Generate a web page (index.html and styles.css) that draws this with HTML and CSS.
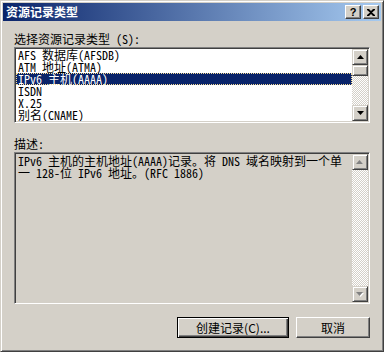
FILE: index.html
```html
<!DOCTYPE html>
<html lang="zh-CN">
<head>
    <meta charset="UTF-8">
    <title>资源记录类型</title>
    <link rel="stylesheet" href="styles.css">
</head>
<body>
    <div class="window">
        <div class="titlebar">
            <span class="title">资源记录类型</span>
            <div class="caption-buttons">
                <span class="cap-btn help">?</span>
                <span class="cap-btn close">
                    <svg width="8" height="7" viewBox="0 0 8 7"><path d="M0 0h2l2 2 2-2h2v1L5 3.5 8 6v1H6L4 5 2 7H0V6l3-2.5L0 1z" fill="#000"/></svg>
                </span>
            </div>
        </div>

        <div class="client">
            <label class="field-label">选择资源记录类型 (S):</label>
            <div class="listbox">
                <ul class="items">
                    <li>AFS 数据库(AFSDB)</li>
                    <li>ATM 地址(ATMA)</li>
                    <li class="selected">IPv6 主机(AAAA)</li>
                    <li>ISDN</li>
                    <li>X.25</li>
                    <li>别名(CNAME)</li>
                </ul>
                <div class="scrollbar">
                    <span class="sb-btn">
                        <svg width="7" height="4" viewBox="0 0 7 4"><path d="M3.5 0L7 4H0z" fill="#000"/></svg>
                    </span>
                    <span class="sb-thumb"></span>
                    <span class="sb-track"></span>
                    <span class="sb-btn">
                        <svg width="7" height="4" viewBox="0 0 7 4"><path d="M0 0h7L3.5 4z" fill="#000"/></svg>
                    </span>
                </div>
            </div>

            <label class="field-label desc-label">描述:</label>
            <div class="descbox">
                <p class="desc-text">IPv6 主机的主机地址(AAAA)记录。将 DNS 域名映射到一个单<br>一 128-位 IPv6 地址。(RFC 1886)</p>
                <div class="scrollbar disabled">
                    <span class="sb-btn">
                        <svg width="8" height="5" viewBox="0 0 8 5"><path d="M4 1L7 4H1z" fill="#fff"/><path d="M3.5 0L7 4H0z" fill="#808080" transform="translate(0 0)"/></svg>
                    </span>
                    <span class="sb-track"></span>
                    <span class="sb-btn">
                        <svg width="8" height="5" viewBox="0 0 8 5"><path d="M1 1h7L4.5 5z" fill="#fff"/><path d="M0 0h7L3.5 4z" fill="#808080"/></svg>
                    </span>
                </div>
            </div>

            <div class="buttons">
                <button class="btn default">创建记录(C)...</button>
                <button class="btn cancel">取消</button>
            </div>
        </div>
    </div>
</body>
</html>
```

FILE: styles.css
```css
body {
    margin: 0;
    background-color: #d4d0c8;
    font-family: "Noto Sans Mono CJK SC", "Liberation Mono", "Noto Sans CJK SC", monospace;
    font-size: 12px;
    color: #000;
}

.window {
    width: 384px;
    height: 352px;
    box-sizing: border-box;
    background-color: #d4d0c8;
    border: 1px solid;
    border-color: #d4d0c8 #404040 #404040 #d4d0c8;
    box-shadow: inset 1px 1px #fff, inset -1px -1px #808080;
    padding: 2px;
    display: flex;
    flex-direction: column;
}

.titlebar {
    height: 18px;
    background: linear-gradient(to right, #0a246a, #a6caf0);
    display: flex;
    align-items: center;
    justify-content: space-between;
    padding: 0 2px 0 3px;
}

.title {
    color: #fff;
    font-family: "Noto Sans CJK SC", sans-serif;
    font-weight: bold;
    font-size: 12px;
    line-height: 14px;
}

.caption-buttons {
    display: flex;
    gap: 2px;
}

.cap-btn {
    width: 16px;
    height: 14px;
    box-sizing: border-box;
    background-color: #d4d0c8;
    border: 1px solid;
    border-color: #fff #404040 #404040 #fff;
    box-shadow: inset -1px -1px #808080;
    display: flex;
    align-items: center;
    justify-content: center;
    font-family: "Liberation Sans", sans-serif;
    font-weight: bold;
    font-size: 11px;
    line-height: 12px;
}

.client {
    flex: 1;
    display: flex;
    flex-direction: column;
    padding: 11px 11px 0 11px;
}

.field-label {
    line-height: 13px;
    margin-bottom: 2px;
    white-space: nowrap;
}

.desc-label {
    margin-top: 14px;
}

.listbox,
.descbox {
    display: flex;
    box-sizing: border-box;
    border: 1px solid;
    border-color: #808080 #fff #fff #808080;
    box-shadow: inset 1px 1px #404040, inset -1px -1px #d4d0c8;
    padding: 1px;
}

.listbox {
    height: 76px;
    background-color: #fff;
}

.descbox {
    height: 152px;
    background-color: #d4d0c8;
}

.items {
    flex: 1;
    list-style: none;
    margin: 0;
    padding: 0;
    overflow: hidden;
}

.items li {
    height: 12px;
    line-height: 12px;
    padding-left: 2px;
    white-space: nowrap;
}

.items li.selected {
    background-color: #0a246a;
    color: #fff;
    outline: 1px dotted #f5db95;
    outline-offset: -1px;
}

.desc-text {
    flex: 1;
    margin: 0;
    padding: 1px 0 0 2px;
    line-height: 12px;
    white-space: nowrap;
    overflow: hidden;
}

.scrollbar {
    width: 16px;
    display: flex;
    flex-direction: column;
}

.sb-btn,
.sb-thumb {
    height: 16px;
    box-sizing: border-box;
    background-color: #d4d0c8;
    border: 1px solid;
    border-color: #d4d0c8 #404040 #404040 #d4d0c8;
    box-shadow: inset 1px 1px #fff, inset -1px -1px #808080;
    display: flex;
    align-items: center;
    justify-content: center;
}

.sb-thumb {
    height: 11px;
}

.sb-track {
    flex: 1;
    background: repeating-conic-gradient(#d4d0c8 0 25%, #fff 0 50%) 0 0 / 2px 2px;
}

.buttons {
    display: flex;
    justify-content: flex-end;
    gap: 7px;
    margin-top: 13px;
}

.btn {
    height: 21px;
    box-sizing: border-box;
    background-color: #d4d0c8;
    border: 1px solid;
    border-color: #fff #404040 #404040 #fff;
    box-shadow: inset -1px -1px #808080;
    font-family: "Noto Sans CJK SC", sans-serif;
    font-size: 12px;
    line-height: 14px;
    padding: 0;
    color: #000;
}

.btn.default {
    width: 112px;
    border-color: #000;
    box-shadow: inset 1px 1px #fff, inset -1px -1px #404040, inset -2px -2px #808080;
}

.btn.cancel {
    width: 74px;
}
```
